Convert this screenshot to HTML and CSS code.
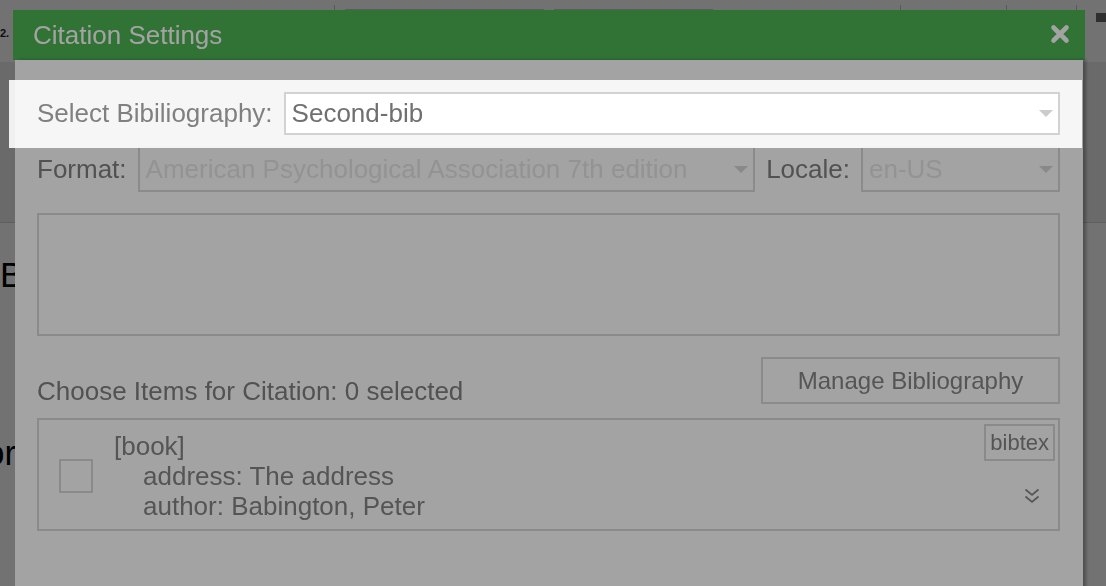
FILE: index.html
```html
<!DOCTYPE html>
<html lang="en">
<head>
    <meta charset="UTF-8">
    <title>Citation Settings</title>
    <link rel="stylesheet" href="styles.css">
</head>
<body>
    <!-- editor page behind the dialog -->
    <div class="page">
        <div class="page-top">
            <span class="page-num">2.</span>
            <span class="page-tick"></span>
            <span class="page-field page-field-wide"></span>
            <span class="page-field page-field-narrow"></span>
            <span class="page-tick page-tick-a"></span>
            <span class="page-field page-field-small"></span>
            <span class="page-tick page-tick-b"></span>
            <span class="page-tick page-tick-c"></span>
            <span class="page-dot"></span>
        </div>
        <div class="page-toolbar"></div>
        <div class="page-heading">B</div>
        <div class="page-para">or</div>
    </div>

    <div class="modal-overlay"></div>

    <div class="dialog">
        <div class="dialog-header">
            <span class="dialog-title">Citation Settings</span>
            <svg class="dialog-close" width="20" height="20" viewBox="0 0 20 20">
                <path d="M3.5 3.5 L16.5 16.5 M16.5 3.5 L3.5 16.5" stroke="#fff" stroke-width="4.6" stroke-linecap="round" fill="none"/>
            </svg>
        </div>
        <div class="dialog-body">
            <div class="form-row bib-row">
                <label class="form-label">Select Bibiliography:</label>
                <div class="select-box">
                    <span>Second-bib</span>
                    <span class="caret"></span>
                </div>
            </div>
            <div class="form-row style-row">
                <label class="form-label">Format:</label>
                <div class="select-box disabled format-select">
                    <span>American Psychological Association 7th edition</span>
                    <span class="caret"></span>
                </div>
                <label class="form-label">Locale:</label>
                <div class="select-box disabled locale-select">
                    <span>en-US</span>
                    <span class="caret"></span>
                </div>
            </div>
            <div class="citation-preview"></div>
            <div class="items-head">
                <span class="form-label">Choose Items for Citation: 0 selected</span>
                <button class="manage-btn">Manage Bibliography</button>
            </div>
            <div class="item-list">
                <div class="item">
                    <span class="item-check"></span>
                    <div class="item-text">
                        <div>[book]</div>
                        <div class="item-field">address: The address</div>
                        <div class="item-field">author: Babington, Peter</div>
                    </div>
                    <span class="item-type">bibtex</span>
                    <svg class="item-expand" width="16" height="16" viewBox="0 0 16 16">
                        <path d="M1.5 1.5 L8 7 L14.5 1.5 M1.5 8.5 L8 14 L14.5 8.5" stroke="#858585" stroke-width="1.7" fill="none"/>
                    </svg>
                </div>
            </div>
        </div>
    </div>

    <div class="tour-overlay"></div>
</body>
</html>
```

FILE: styles.css
```css
* {
    margin: 0;
    padding: 0;
    box-sizing: border-box;
}
html, body {
    height: 100%;
    overflow: hidden;
}
body {
    font-family: 'Liberation Sans', Arial, sans-serif;
    background-color: #fff;
    color: #000;
}

/* page under the modal */
.page-top {
    display: flex;
    align-items: flex-start;
    height: 62px;
}
.page-num {
    width: 334px;
    margin-top: 27px;
    font-size: 11px;
    font-weight: bold;
    color: #222;
}
.page-tick {
    width: 1px;
    height: 6px;
    margin-top: 5px;
    background-color: #c8c8c8;
}
.page-field {
    height: 40px;
    margin-top: 9px;
    margin-left: 10px;
    border: 1px solid #cfcfcf;
}
.page-field-wide {
    width: 200px;
}
.page-field-narrow {
    width: 159px;
}
.page-tick-a {
    margin-left: 187px;
}
.page-field-small {
    width: 35px;
    margin-left: 56px;
    margin-top: 13px;
}
.page-tick-b {
    margin-left: 14px;
}
.page-tick-c {
    margin-left: 69px;
}
.page-dot {
    width: 10px;
    height: 9px;
    margin-top: 13px;
    margin-left: 19px;
    background-color: #6a6a6a;
}
.page-toolbar {
    height: 161px;
    background-color: #efefef;
    border-bottom: 1px solid #d4d4d4;
}
.page-heading {
    margin-top: 32px;
    font-size: 35px;
    line-height: 40px;
}
.page-para {
    margin-top: 138px;
    margin-left: -15px;
    font-size: 35px;
    line-height: 40px;
}

.modal-overlay {
    position: fixed;
    inset: 0;
    background-color: rgba(0, 0, 0, 0.3);
}

/* dialog */
.dialog {
    position: absolute;
    left: 13px;
    top: 10px;
    width: 1072px;
}
.dialog-header {
    display: flex;
    align-items: center;
    justify-content: space-between;
    height: 50px;
    padding: 0 15px 0 20px;
    background-color: #4db254;
}
.dialog-title {
    font-size: 26px;
    color: #fff;
}
.dialog-close {
    display: block;
    margin-top: -2px;
}
.dialog-body {
    margin: 0 2px;
    padding: 32px 23px 80px 22px;
    background-color: #fff;
    box-shadow: 3px 0 3px rgba(0, 0, 0, 0.3);
}
.form-row {
    display: flex;
    align-items: center;
    gap: 11px;
}
.form-label {
    font-size: 26px;
    color: #808080;
    white-space: nowrap;
}
.select-box {
    display: flex;
    align-items: center;
    justify-content: space-between;
    flex: 1;
    height: 100%;
    padding: 0 5px 0 6px;
    border: 2px solid #d2d2d2;
    background-color: #fff;
    font-size: 26px;
    color: #707070;
    white-space: nowrap;
    overflow: hidden;
}
.caret {
    width: 0;
    height: 0;
    border-left: 7px solid transparent;
    border-right: 7px solid transparent;
    border-top: 7px solid #ccc;
}
.select-box.disabled {
    border-color: #dadada;
    color: #e6e6e6;
}
.select-box.disabled .caret {
    border-top-color: #d6d6d6;
}
.locale-select {
    flex: 0 0 199px;
}

/* the row highlighted by the tour sits above the tour overlay */
.bib-row {
    position: relative;
    z-index: 20;
    height: 43px;
}
.bib-row::before {
    content: '';
    position: absolute;
    top: -12px;
    bottom: -13px;
    left: -28px;
    right: -22px;
    background-color: rgba(255, 255, 255, 0.9);
    z-index: -1;
}
.style-row {
    height: 46px;
    margin-top: 11px;
}
.citation-preview {
    height: 123px;
    margin-top: 21px;
    border: 2px solid #d8d8d8;
    background-color: #fff;
}
.items-head {
    display: flex;
    align-items: flex-end;
    justify-content: space-between;
    margin-top: 21px;
}
.items-head .form-label {
    margin-bottom: -3px;
}
.manage-btn {
    width: 299px;
    height: 47px;
    border: 2px solid #dadada;
    background-color: #fff;
    font-family: inherit;
    font-size: 24px;
    color: #858585;
}
.item-list {
    margin-top: 14px;
    border: 2px solid #d8d8d8;
}
.item {
    position: relative;
    display: flex;
    align-items: center;
    gap: 21px;
    padding: 11px 20px 8px 20px;
}
.item-check {
    width: 34px;
    height: 34px;
    border: 2px solid #d8d8d8;
}
.item-text {
    font-size: 26px;
    line-height: 30px;
    color: #858585;
}
.item-field {
    padding-left: 29px;
}
.item-type {
    position: absolute;
    top: 4px;
    right: 3px;
    height: 37px;
    padding: 0 4px;
    border: 2px solid #d8d8d8;
    font-size: 22px;
    line-height: 33px;
    color: #858585;
}
.item-expand {
    position: absolute;
    top: 68px;
    right: 18px;
}

.tour-overlay {
    position: fixed;
    inset: 0;
    z-index: 10;
    background-color: rgba(0, 0, 0, 0.36);
}
```
